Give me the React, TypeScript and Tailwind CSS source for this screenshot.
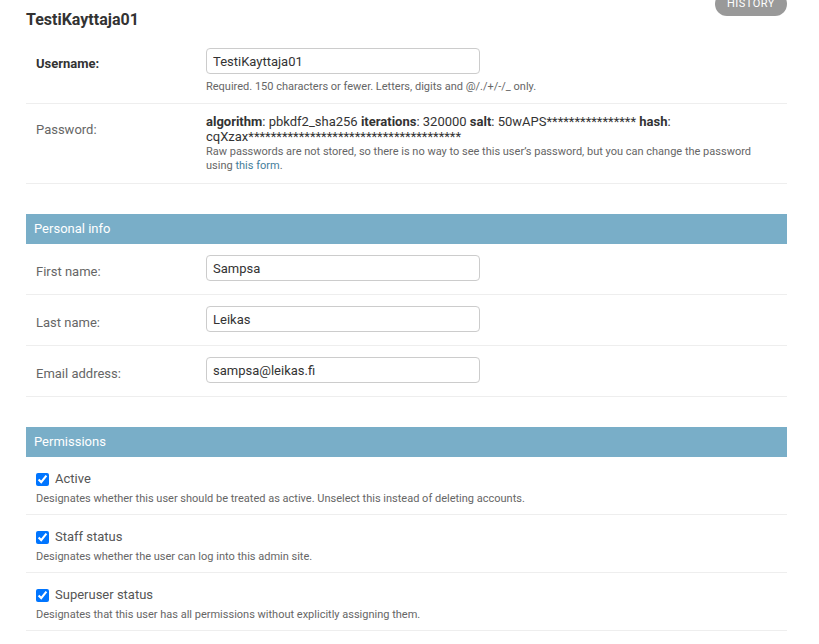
import React from "react";

function TextRow({
  label,
  value,
  required,
  help,
}: {
  label: string;
  value: string;
  required?: boolean;
  help?: string;
}) {
  return (
    <div className="border-b border-[#eeeeee] p-[10px]">
      <div className={"flex " + (help ? "" : "h-[30px]")}>
        <label
          className={
            "w-[160px] shrink-0 pr-[10px] text-[13px] " +
            (required
              ? "pt-[6px] font-bold text-[#333333]"
              : "pt-[8px] text-[#666666]")
          }
        >
          {label}
        </label>
        <input
          type="text"
          defaultValue={value}
          className={
            "ml-[10px] h-[26px] w-[274px] rounded-[4px] border border-[#cccccc] px-[6px] text-[13px] text-[#333333] outline-none " +
            (help ? "" : "mt-[1px]")
          }
        />
      </div>
      {help ? (
        <div className="ml-[170px] mt-[6px] text-[11px] leading-[13px] text-[#666666]">
          {help}
        </div>
      ) : null}
    </div>
  );
}

function CheckRow({ label, help }: { label: string; help: string }) {
  return (
    <div className="border-b border-[#eeeeee] px-[10px] pt-[12px] pb-[8px]">
      <div className="flex h-[20px] items-center">
        <input
          type="checkbox"
          defaultChecked
          className="m-0 h-[13px] w-[13px]"
        />
        <span className="ml-[6px] text-[13px] text-[#555555]">{label}</span>
      </div>
      <div className="mt-[3px] text-[11px] leading-[14px] text-[#666666]">
        {help}
      </div>
    </div>
  );
}

function Caption({ children }: { children: React.ReactNode }) {
  return (
    <h2 className="h-[30px] bg-[#79aec8] px-[8px] text-[13px] leading-[30px] text-white">
      {children}
    </h2>
  );
}

export default function App() {
  return (
    <div
      className="min-h-[644px] bg-white pl-[26px] pr-[32px] text-[#333333]"
      style={{ fontFamily: "Roboto, 'Liberation Sans', sans-serif" }}
    >
      <div className="flex items-start justify-between">
        <h2 className="mt-[10px] text-[16px] font-bold leading-[20px] text-[#333333]">
          TestiKayttaja01
        </h2>
        <div className="-mt-[8px] flex h-[24px] w-[72px] items-center justify-center rounded-[15px] bg-[#999999] text-[11px] uppercase tracking-[0.5px] text-white">
          History
        </div>
      </div>

      <div className="mt-[8px]">
        <TextRow
          label="Username:"
          value="TestiKayttaja01"
          required
          help="Required. 150 characters or fewer. Letters, digits and @/./+/-/_ only."
        />
        <div className="border-b border-[#eeeeee] p-[10px]">
          <div className="flex">
            <label className="w-[160px] shrink-0 pt-[6px] pr-[10px] text-[13px] text-[#666666]">
              Password:
            </label>
            <div className="ml-[10px] flex-1">
              <div className="text-[13px] leading-[15px] text-[#333333]">
                <strong>algorithm</strong>: pbkdf2_sha256{" "}
                <strong>iterations</strong>: 320000 <strong>salt</strong>:
                50wAPS**************** <strong>hash</strong>:
                <br />
                cqXzax**************************************
              </div>
              <div className="mt-[1px] text-[11px] leading-[14px] text-[#666666]">
                Raw passwords are not stored, so there is no way to see this
                user’s password, but you can change the password using{" "}
                <a className="text-[#447e9b]">this form</a>.
              </div>
            </div>
          </div>
        </div>

        <div className="mt-[30px]">
          <Caption>Personal info</Caption>
          <TextRow label="First name:" value="Sampsa" />
          <TextRow label="Last name:" value="Leikas" />
          <TextRow label="Email address:" value="sampsa@leikas.fi" />
        </div>

        <div className="mt-[30px]">
          <Caption>Permissions</Caption>
          <CheckRow
            label="Active"
            help="Designates whether this user should be treated as active. Unselect this instead of deleting accounts."
          />
          <CheckRow
            label="Staff status"
            help="Designates whether the user can log into this admin site."
          />
          <CheckRow
            label="Superuser status"
            help="Designates that this user has all permissions without explicitly assigning them."
          />
        </div>
      </div>
    </div>
  );
}
